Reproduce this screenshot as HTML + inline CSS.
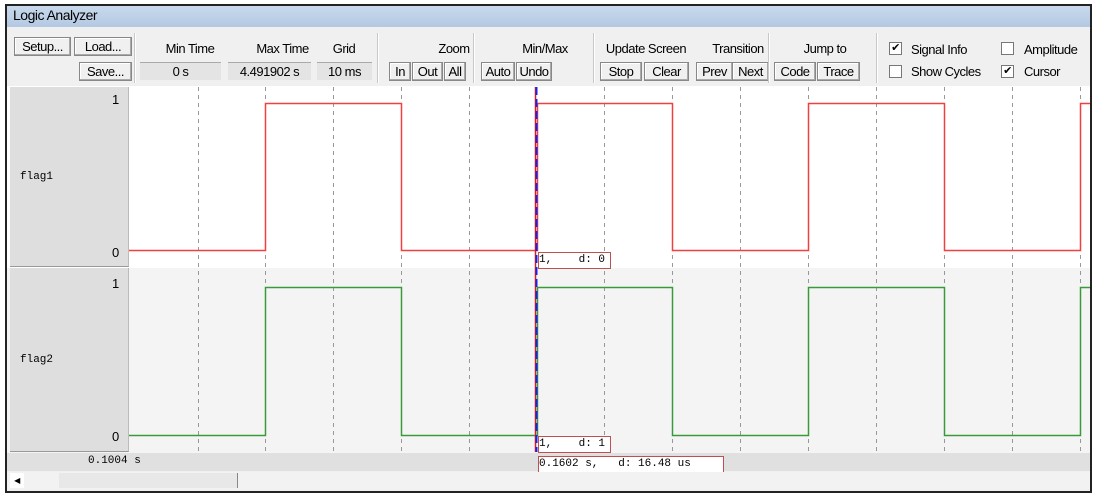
<!DOCTYPE html>
<html><head><meta charset="utf-8"><style>
body{margin:0;width:1095px;height:493px;background:#fff;position:relative;overflow:hidden;font-family:"Liberation Sans",sans-serif;font-size:13px;letter-spacing:-0.5px}
.a{position:absolute}
.btn{position:absolute;border:1px solid #888;box-shadow:inset -1px -1px #aaa, inset 1px 1px #fff;background:#f0f0f0;text-align:center;line-height:17px;height:17px;color:#000}
.fld{position:absolute;background:#e4e4e4;border-top:1px solid #aaa;text-align:center;height:17px;line-height:17px}
.lbl{position:absolute;text-align:center}
.sep{position:absolute;top:33px;width:1px;height:50px;background:#c8c8c8;border-right:1px solid #fff}
.mono{font-family:"Liberation Mono",monospace;font-size:11px;letter-spacing:0}
.cb{position:absolute;width:11px;height:11px;border:1px solid #777;background:#fff;font-size:11px;line-height:11px;text-align:center}
</style></head><body>
<div class="a" style="left:5px;top:4px;width:1083px;height:485px;border:2px solid #222;background:#f0f0f0"></div>
<div class="a" style="left:7px;top:6px;width:1083px;height:21px;background:linear-gradient(#c9d9ec,#b4c9e2);"></div>
<div class="a" style="left:13px;top:7px;font-size:14px">Logic Analyzer</div>

<div class="btn" style="left:14px;top:37px;width:55px">Setup...</div>
<div class="btn" style="left:74px;top:37px;width:56px">Load...</div>
<div class="btn" style="left:79px;top:62px;width:51px">Save...</div>
<div class="sep" style="left:134px"></div>
<div class="lbl" style="left:140px;top:41px;width:100px">Min Time</div>
<div class="fld" style="left:140px;top:62px;width:81px">0 s</div>
<div class="lbl" style="left:230px;top:41px;width:105px">Max Time</div>
<div class="fld" style="left:228px;top:62px;width:83px">4.491902 s</div>
<div class="lbl" style="left:316px;top:41px;width:56px">Grid</div>
<div class="fld" style="left:317px;top:62px;width:55px">10 ms</div>
<div class="sep" style="left:377px"></div>
<div class="lbl" style="left:389px;top:41px;width:130px">Zoom</div>
<div class="btn" style="left:389px;top:62px;width:20px">In</div>
<div class="btn" style="left:412px;top:62px;width:29px">Out</div>
<div class="btn" style="left:444px;top:62px;width:20px">All</div>
<div class="sep" style="left:473px"></div>
<div class="lbl" style="left:505px;top:41px;width:80px">Min/Max</div>
<div class="btn" style="left:481px;top:62px;width:32px">Auto</div>
<div class="btn" style="left:516px;top:62px;width:34px">Undo</div>
<div class="sep" style="left:593px"></div>
<div class="lbl" style="left:596px;top:41px;width:100px">Update Screen</div>
<div class="btn" style="left:600px;top:62px;width:40px">Stop</div>
<div class="btn" style="left:644px;top:62px;width:43px">Clear</div>
<div class="lbl" style="left:698px;top:41px;width:80px">Transition</div>
<div class="btn" style="left:696px;top:62px;width:35px">Prev</div>
<div class="btn" style="left:732px;top:62px;width:35px">Next</div>
<div class="sep" style="left:768px"></div>
<div class="lbl" style="left:775px;top:41px;width:100px">Jump to</div>
<div class="btn" style="left:774px;top:62px;width:40px">Code</div>
<div class="btn" style="left:817px;top:62px;width:41px">Trace</div>
<div class="sep" style="left:876px"></div>
<div class="cb" style="left:889px;top:42px">✔</div><div class="a" style="left:911px;top:42px">Signal Info</div>
<div class="cb" style="left:1001px;top:42px"></div><div class="a" style="left:1024px;top:42px">Amplitude</div>
<div class="cb" style="left:889px;top:65px"></div><div class="a" style="left:911px;top:64px">Show Cycles</div>
<div class="cb" style="left:1001px;top:65px">✔</div><div class="a" style="left:1024px;top:64px">Cursor</div>

<div class="a" style="left:7px;top:86px;width:1083px;height:182px;background:#fff"></div>
<div class="a" style="left:7px;top:268px;width:1083px;height:185px;background:#f4f4f4"></div>
<div class="a" style="left:10px;top:87px;width:118px;height:179px;background:#dedede;border-right:1px solid #bbb;border-bottom:1px solid #999"></div>
<div class="a" style="left:10px;top:268px;width:118px;height:183px;background:#dedede;border-right:1px solid #bbb;border-bottom:1px solid #999"></div>
<div class="a" style="left:112px;top:92px">1</div>
<div class="a" style="left:112px;top:245px">0</div>
<div class="a" style="left:112px;top:276px">1</div>
<div class="a" style="left:112px;top:429px">0</div>
<div class="a mono" style="left:20px;top:171px">flag1</div>
<div class="a mono" style="left:20px;top:354px">flag2</div>
<svg class="a" style="left:0;top:0" width="1095" height="493">
<g stroke="#999" stroke-dasharray="4,4" stroke-width="1">
<path d="M198.5 87V452M333.5 87V452M469.5 87V452M604.5 87V452M740.5 87V452M876.5 87V452M1012.5 87V452M265.5 87V452M401.5 87V452M672.5 87V452M808.5 87V452M944.5 87V452M1080.5 87V452"/>
</g>
<path d="M129 250.5H265.5V103.5H401.5V250.5H537.5V103.5H672.5V250.5H808.5V103.5H944.5V250.5H1080.5V103.5H1090" fill="none" stroke="#f04040" stroke-width="1.5"/>
<path d="M129 435.5H265.5V287.5H401.5V435.5H537.5V287.5H672.5V435.5H808.5V287.5H944.5V435.5H1080.5V287.5H1090" fill="none" stroke="#3a9a3a" stroke-width="1.5"/>
<path d="M535.5 87V452" stroke="#d02020" stroke-width="1.5"/>
<path d="M536.5 87V452" stroke="#2020e0" stroke-width="2" stroke-dasharray="8,4"/>
</svg>
<div class="a mono" style="left:538px;top:252px;width:71px;height:15px;line-height:15px;border:1px solid #c05050;background:#fff">1,&nbsp;&nbsp;&nbsp; d: 0</div>
<div class="a mono" style="left:538px;top:436px;width:71px;height:15px;line-height:15px;border:1px solid #c05050;background:#fff">1,&nbsp;&nbsp;&nbsp; d: 1</div>
<div class="a" style="left:7px;top:453px;width:1083px;height:18px;background:#e0e0e0"></div>
<div class="a mono" style="left:88px;top:455px">0.1004 s</div>
<div class="a mono" style="left:538px;top:456px;width:184px;height:15px;line-height:15px;border:1px solid #c05050;background:#fff">0.1602 s,&nbsp;&nbsp; d: 16.48 us</div>
<div class="a" style="left:7px;top:472px;width:1083px;height:17px;background:#f2f2f2"></div>
<div class="a" style="left:10px;top:473px;width:14px;height:15px;background:#fff;font-size:8px;line-height:15px;text-align:center">◀</div>
<div class="a" style="left:59px;top:473px;width:178px;height:15px;background:#e8e8e8;border-right:1px solid #888"></div>
</body></html>
